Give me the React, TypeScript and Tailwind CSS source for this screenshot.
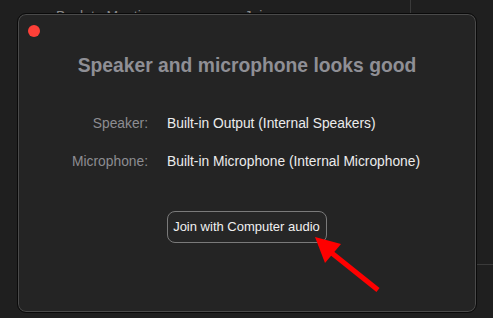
const font = { fontFamily: '"Liberation Sans", Arial, sans-serif' };

const Row = ({ label, value }: { label: string; value: string }) => (
  <>
    <span className="text-right text-[#8d8d92]">{label}</span>
    <span className="text-[#ececec]">{value}</span>
  </>
);

export default function App() {
  return (
    <div
      className="relative w-[493px] h-[318px] overflow-hidden bg-[#1f1f1f] text-[13px]"
      style={font}
    >
      {/* meeting window behind the dialog */}
      <div className="flex h-[24px] items-end">
        <span className="ml-[56px] text-[14px] text-[#8a8a8a] leading-[16px]">Back to Meeting</span>
        <span className="ml-[88px] text-[14px] text-[#8a8a8a] leading-[16px]">Join</span>
        <div className="ml-auto mr-[82px] h-full w-px bg-[#3a3a3a]" />
      </div>
      <div className="absolute right-0 top-[264px] h-px w-[16px] bg-[#3a3a3a]" />

      <div className="absolute left-[17px] top-[13px] flex h-[300px] w-[460px] flex-col rounded-[9px] border border-[#0a0a0a] bg-[#242424] shadow-[inset_0_0_0_1px_#4a4a4a]">
        <div className="ml-[10px] mt-[11px] h-[12px] w-[12px] rounded-full bg-[#fe4038]" />
        <h1 className="mt-[17px] text-center text-[19.3px] font-bold leading-[24px] text-[#8f8f95]">
          Speaker and microphone looks good
        </h1>
        <div className="mt-[38px] grid grid-cols-[130px_1fr] gap-x-[19px] gap-y-[22px] text-[13.8px] leading-[16px]">
          <Row label="Speaker:" value="Built-in Output (Internal Speakers)" />
          <Row label="Microphone:" value="Built-in Microphone (Internal Microphone)" />
        </div>
        <div className="mt-[41px] flex justify-center">
          <button className="ml-[-1px] h-[32px] w-[160px] rounded-[8px] border border-[#7a7a7a] bg-[#262626] text-[#f0f0f0]">
            Join with Computer audio
          </button>
        </div>
      </div>

      <svg className="absolute left-0 top-0" width="493" height="318" viewBox="0 0 493 318">
        <line x1="378" y1="290" x2="328" y2="250" stroke="#ff0000" strokeWidth="5" />
        <polygon points="315,237 341,244 325,263" fill="#ff0000" />
      </svg>
    </div>
  );
}
